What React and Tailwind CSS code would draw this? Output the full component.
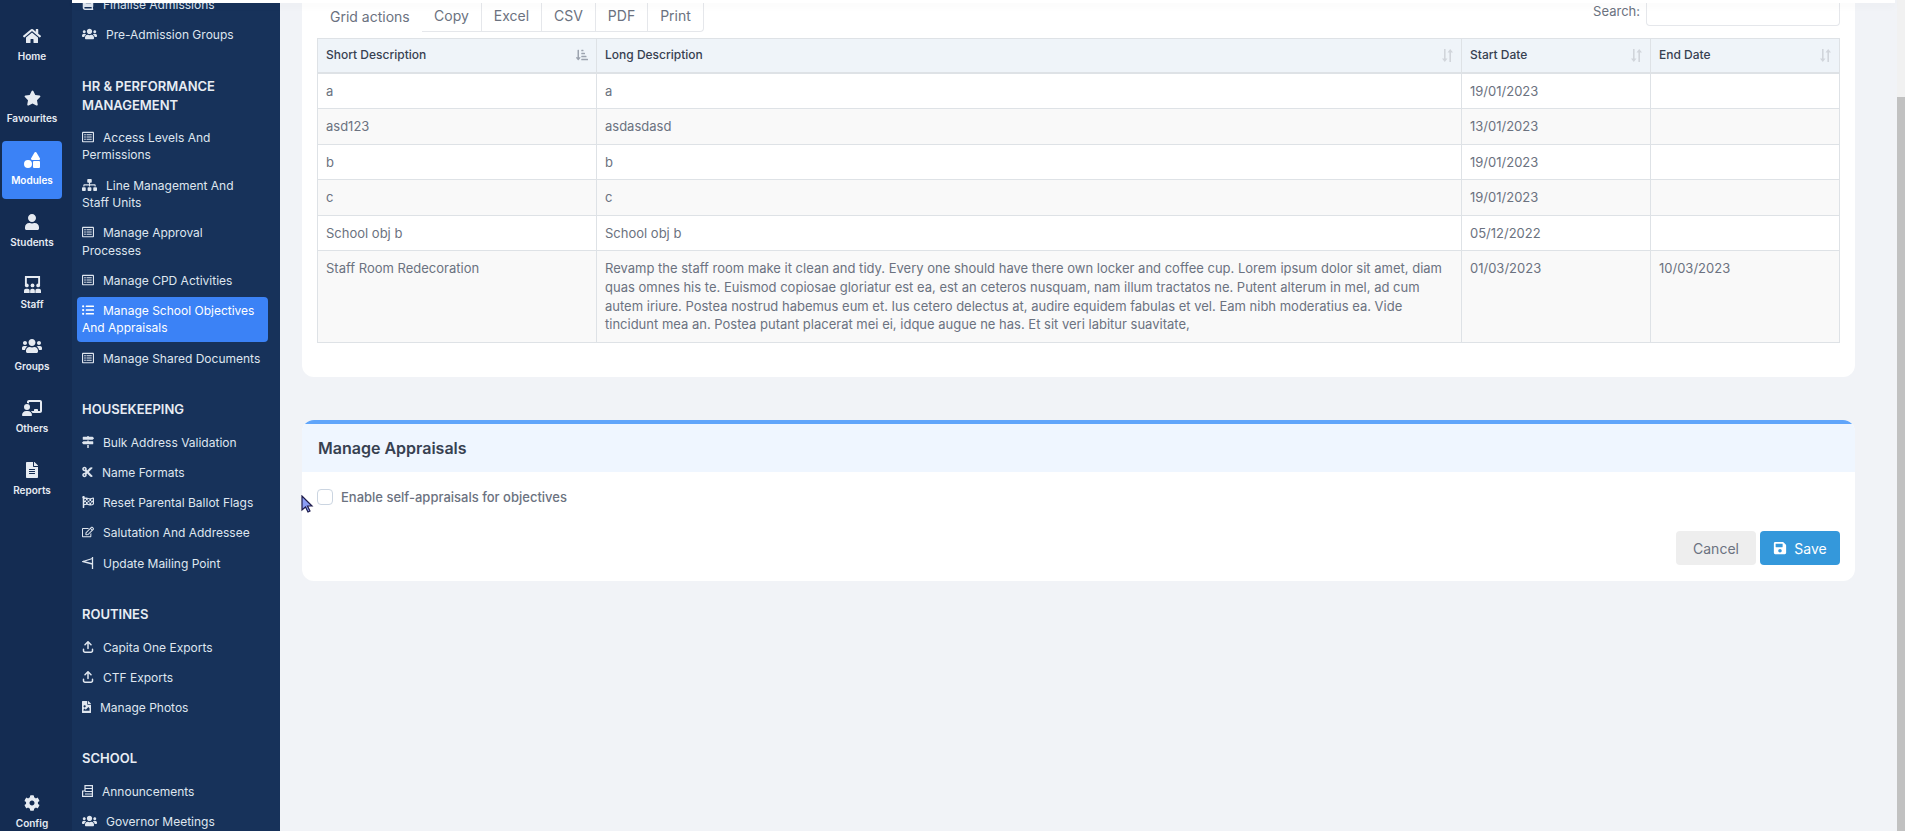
import { FaHome, FaStar, FaShapes, FaUser, FaUsers, FaFileAlt, FaCog, FaRegListAlt, FaSitemap, FaListUl, FaMapSigns, FaCut, FaFlagCheckered, FaRegEdit, FaFileImage, FaSave, FaBook, FaSortAmountDownAlt } from 'react-icons/fa';
import { FaArrowUpFromBracket, FaChalkboardUser } from 'react-icons/fa6';

// Staff rail icon: board with three people under it
function StaffIcon({ className }) {
  return (
    <svg viewBox="0 0 20 18" fill="currentColor" className={className}>
      <path d="M2 0h16v10h-2V2H4v8H2z" />
      <circle cx="4" cy="10" r="2" />
      <circle cx="10" cy="10" r="2" />
      <circle cx="16" cy="10" r="2" />
      <path d="M1 18v-2.500A2 2 0 0 1 3 13.500h2a2 2 0 0 1 2 2V18zM7.500 18v-2.500a2 2 0 0 1 2-2h1a2 2 0 0 1 2 2V18zM13 18v-2.500a2 2 0 0 1 2-2h2a2 2 0 0 1 2 2V18z" />
    </svg>
  );
}

// Update Mailing Point pennant
function PennantIcon({ className }) {
  return (
    <svg viewBox="0 0 12 12" fill="none" stroke="currentColor" strokeWidth="1.300" className={className}>
      <path d="M10.500 0v12" />
      <path d="M10.500 1.500 1 4.500l9.500 2.500" />
    </svg>
  );
}

// Announcements: small printed sheet
function SheetIcon({ className }) {
  return (
    <svg viewBox="0 0 11 12" fill="none" stroke="currentColor" strokeWidth="1.200" className={className}>
      <path d="M3 .6h7.400v10.800H.6V6H3z" />
      <path d="M3 3.500h7M3 6.500h7M3 9h7" />
    </svg>
  );
}

// unsorted column marker: down arrow beside up arrow
function SortArrows({ className }) {
  return (
    <svg viewBox="0 0 11 13" fill="currentColor" className={className}>
      <path d="M2 0h1.600v9.500H5.500L2.800 13 0 9.500h2z" />
      <path d="M7.400 13h1.600V3.500H11L8.200 0 5.500 3.500h1.900z" />
    </svg>
  );
}

const railItems = [
  { label: 'Home', Icon: FaHome, size: 'w-[18px] h-4' },
  { label: 'Favourites', Icon: FaStar, size: 'w-[17px] h-4' },
  { label: 'Modules', Icon: FaShapes, size: 'w-4 h-4', active: true },
  { label: 'Students', Icon: FaUser, size: 'w-[14px] h-4' },
  { label: 'Staff', Icon: StaffIcon, size: 'w-[19px] h-[17px]' },
  { label: 'Groups', Icon: FaUsers, size: 'w-5 h-4' },
  { label: 'Others', Icon: FaChalkboardUser, size: 'w-5 h-4' },
  { label: 'Reports', Icon: FaFileAlt, size: 'w-3 h-4' },
];

const groups = [
  {
    items: [
      { label: 'Finalise Admissions', Icon: FaBook, size: 'w-3 h-3' },
      { label: 'Pre-Admission Groups', Icon: FaUsers, size: 'w-[15px] h-3' },
    ],
  },
  {
    title: 'HR & PERFORMANCE MANAGEMENT',
    items: [
      { label: 'Access Levels And Permissions', Icon: FaRegListAlt, size: 'w-3 h-3' },
      { label: 'Line Management And Staff Units', Icon: FaSitemap, size: 'w-[15px] h-3' },
      { label: 'Manage Approval Processes', Icon: FaRegListAlt, size: 'w-3 h-3' },
      { label: 'Manage CPD Activities', Icon: FaRegListAlt, size: 'w-3 h-3' },
      { label: 'Manage School Objectives And Appraisals', Icon: FaListUl, size: 'w-3 h-3', active: true },
      { label: 'Manage Shared Documents', Icon: FaRegListAlt, size: 'w-3 h-3' },
    ],
  },
  {
    title: 'HOUSEKEEPING',
    items: [
      { label: 'Bulk Address Validation', Icon: FaMapSigns, size: 'w-3 h-3' },
      { label: 'Name Formats', Icon: FaCut, size: 'w-[11px] h-3' },
      { label: 'Reset Parental Ballot Flags', Icon: FaFlagCheckered, size: 'w-3 h-3' },
      { label: 'Salutation And Addressee', Icon: FaRegEdit, size: 'w-3 h-3' },
      { label: 'Update Mailing Point', Icon: PennantIcon, size: 'w-3 h-3' },
    ],
  },
  {
    title: 'ROUTINES',
    items: [
      { label: 'Capita One Exports', Icon: FaArrowUpFromBracket, size: 'w-3 h-3' },
      { label: 'CTF Exports', Icon: FaArrowUpFromBracket, size: 'w-3 h-3' },
      { label: 'Manage Photos', Icon: FaFileImage, size: 'w-[9px] h-3' },
    ],
  },
  {
    title: 'SCHOOL',
    items: [
      { label: 'Announcements', Icon: SheetIcon, size: 'w-[11px] h-3' },
      { label: 'Governor Meetings', Icon: FaUsers, size: 'w-[15px] h-3' },
    ],
  },
];

const rows = [
  ['a', 'a', '19/01/2023', ''],
  ['asd123', 'asdasdasd', '13/01/2023', ''],
  ['b', 'b', '19/01/2023', ''],
  ['c', 'c', '19/01/2023', ''],
  ['School obj b', 'School obj b', '05/12/2022', ''],
  [
    'Staff Room Redecoration',
    'Revamp the staff room make it clean and tidy. Every one should have there own locker and coffee cup. Lorem ipsum dolor sit amet, diam quas omnes his te. Euismod copiosae gloriatur est ea, est an ceteros nusquam, nam illum tractatos ne. Putent alterum in mel, ad cum autem iriure. Postea nostrud habemus eum et. Ius cetero delectus at, audire equidem fabulas et vel. Eam nibh moderatius ea. Vide tincidunt mea an. Postea putant placerat mei ei, idque augue ne has. Et sit veri labitur suavitate,',
    '01/03/2023',
    '10/03/2023',
  ],
];

const headers = ['Short Description', 'Long Description', 'Start Date', 'End Date'];
const actions = [
  { label: 'Copy', w: 'w-[60px]' },
  { label: 'Excel', w: 'w-[60px]' },
  { label: 'CSV', w: 'w-[54px]' },
  { label: 'PDF', w: 'w-[52px]' },
  { label: 'Print', w: 'w-[56px]' },
];

function Rail() {
  return (
    <div className="w-[72px] shrink-0 h-full bg-[#142c52] flex flex-col pl-[2px] pt-[17px]">
      {railItems.map((it) => (
        <div
          key={it.label}
          className={`w-[60px] h-[58px] mb-[4px] rounded flex flex-col items-center pt-[11px] text-[#e6ebf2] ${it.active ? 'bg-[#3b82f6] text-white' : ''}`}
        >
          <div className="h-4 flex items-center justify-center">
            <it.Icon className={it.size} />
          </div>
          <span className="mt-[5px] text-[10px] leading-[14px] font-semibold">{it.label}</span>
        </div>
      ))}
      <div className="mt-auto w-[60px] flex flex-col items-center text-[#e6ebf2]">
        <FaCog className="w-4 h-4" />
        <span className="mt-[5px] mb-[1px] text-[10px] leading-[14px] font-semibold">Config</span>
      </div>
    </div>
  );
}

function Sidebar() {
  return (
    <div className="w-[208px] shrink-0 h-full overflow-hidden bg-[#17325a] pl-[5px] pr-[12px] text-[12px] text-[#dfe6ef]">
      <div className="-mt-[15px]">
        {groups.map((g, i) => (
          <div key={i}>
            {g.title && (
              <div className="mt-[28px] mb-[9.500px] px-[5px] text-[13px] font-semibold leading-[19px] text-[#e8edf4]">{g.title}</div>
            )}
            {g.items.map((it) => (
              <div
                key={it.label}
                className={`mt-[3px] px-[5px] py-[5px] leading-[17.300px] rounded ${it.active ? 'bg-[#3b82f6] text-white' : ''}`}
              >
                <it.Icon className={`inline-block align-[-1px] mr-[9px] ${it.size}`} />
                {it.label}
              </div>
            ))}
          </div>
        ))}
      </div>
    </div>
  );
}

function ObjectivesCard() {
  return (
    <div className="bg-white rounded-b-xl px-[15px] pb-[34px]">
      <div className="h-[35px] flex justify-between items-start">
        <div className="flex h-[29px] text-[14px] text-[#6b7280]">
          <div className="w-[105px] flex items-center pl-[13px] pb-[3px]">Grid actions</div>
          {actions.map((a) => (
            <div key={a.label} className={`${a.w} flex items-center justify-center pb-[3px] border-r border-b border-[#e5e7eb] first:border-l last:rounded-br`}>
              {a.label}
            </div>
          ))}
        </div>
        <div className="flex items-start text-[13px] text-[#6b7280]">
          <span className="mr-[6px] leading-[16px]">Search:</span>
          <div className="w-[194px] h-[23px] bg-white border-x border-b border-[#e5e7eb] rounded-b" />
        </div>
      </div>
      <table className="w-full table-fixed border-collapse text-[13px] leading-[18.570px] text-[#6b7280]">
        <colgroup>
          <col className="w-[279px]" />
          <col className="w-[865px]" />
          <col className="w-[189px]" />
          <col />
        </colgroup>
        <thead>
          <tr className="bg-[#eff4f9]">
            {headers.map((h, i) => (
              <th key={h} className="relative border border-b-2 border-[#dee2e6] px-[8px] py-[7px] text-left text-[12px] font-medium text-[#374151]">
                {h}
                {i === 0 ? (
                  <FaSortAmountDownAlt className="absolute right-[8px] top-[10px] w-3 h-3 text-[#9ca3af]" />
                ) : (
                  <SortArrows className="absolute right-[8px] top-[10px] w-[11px] h-[13px] text-[#d1d5db]" />
                )}
              </th>
            ))}
          </tr>
        </thead>
        <tbody>
          {rows.map((r, i) => (
            <tr key={i} className={i % 2 ? 'bg-[#f9f9f9]' : 'bg-white'}>
              {r.map((c, j) => (
                <td key={j} className="border border-[#dee2e6] px-[8px] py-[8px] align-top">
                  {c}
                </td>
              ))}
            </tr>
          ))}
        </tbody>
      </table>
    </div>
  );
}

function AppraisalsCard() {
  return (
    <div className="mt-[43px] bg-white rounded-xl overflow-hidden">
      <div className="h-[52px] border-t-4 border-[#60a5fa] bg-[#eff6ff] px-[16px] flex items-center text-[16px] font-semibold text-[#374151]">
        Manage Appraisals
      </div>
      <div className="px-[15px] pt-[16px] pb-[16px]">
        <div className="flex items-center text-[13px] font-medium text-[#6b7280]">
          <div className="w-[16px] h-[16px] rounded border border-[#cbd5e1] bg-white" />
          <span className="ml-[8px]">Enable self-appraisals for objectives</span>
        </div>
        <div className="mt-[24px] flex justify-end gap-[4px] text-[14px]">
          <div className="w-[80px] h-[34px] rounded bg-[#eeeeee] text-[#6b7280] flex items-center justify-center">Cancel</div>
          <div className="w-[80px] h-[34px] rounded bg-[#3498db] text-white flex items-center justify-center">
            <FaSave className="w-[14px] h-[14px] mr-[7px]" />
            Save
          </div>
        </div>
      </div>
    </div>
  );
}

export default function App() {
  return (
    <div className="relative h-screen w-full flex overflow-hidden bg-[#f1f3f7] font-['Inter',sans-serif]">
      <Rail />
      <div className="flex-1 min-w-0 h-full flex flex-col">
        <div className="relative z-10 h-[3px] shrink-0 bg-white mr-[2px] shadow-[0_2px_10px_rgba(0,0,0,0.06)]" />
        <div className="flex-1 min-h-0 flex">
          <Sidebar />
          <div className="flex-1 min-w-0 overflow-hidden pl-[22px] pr-[42px]">
            <ObjectivesCard />
            <AppraisalsCard />
          </div>
        </div>
      </div>
      <div className="w-2 shrink-0 h-full bg-[#f1f1f1] pt-[97px]">
        <div className="h-full bg-[#c1c1c1]" />
      </div>
      {/* mouse pointer */}
      <svg viewBox="0 0 13 18" className="absolute left-[301px] top-[495px] w-[13px] h-[18px]">
        <path d="M1 1v14l3.500-3 2.500 5 2-1-2.500-5H11z" fill="#8b9df5" stroke="#1e1b4b" strokeWidth="1.200" />
      </svg>
    </div>
  );
}
